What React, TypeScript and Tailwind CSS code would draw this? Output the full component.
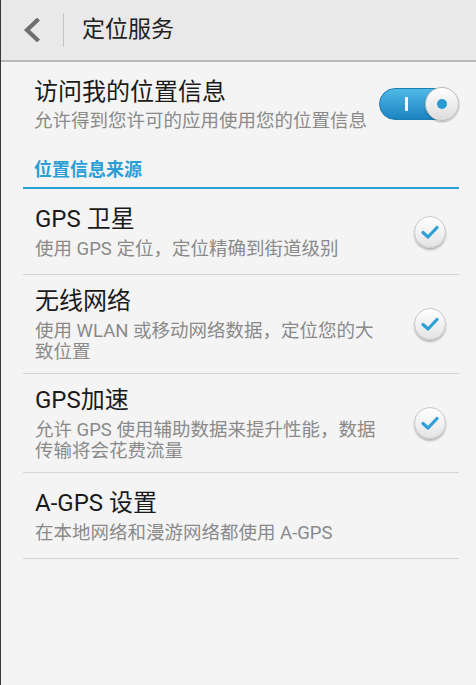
import React from "react";

const font = { fontFamily: '"Roboto", "Noto Sans CJK SC", sans-serif' };

function Check() {
  return (
    <div className="w-[32px] h-[32px] rounded-full bg-gradient-to-b from-[#ffffff] to-[#e4e4e4] border border-[#c9c9c9] shadow-[0_2px_2px_rgba(0,0,0,0.25)] flex items-center justify-center shrink-0">
      <svg width="20" height="16" viewBox="0 0 20 16">
        <path d="M3 8.5 L8 13 L17 3.5" fill="none" stroke="#2f9fd6" strokeWidth="3.2" strokeLinecap="round" strokeLinejoin="round" />
      </svg>
    </div>
  );
}

function Toggle() {
  return (
    <div className="relative w-[80px] h-[32px] shrink-0">
      <div className="absolute left-0 top-0 w-[76px] h-[32px] rounded-full bg-gradient-to-b from-[#4fb9e6] to-[#1b84c0] border border-[#1d7fb4] flex items-center pl-[25px]">
        <div className="w-[3px] h-[14px] bg-white rounded-[1px]" />
      </div>
      <div className="absolute right-0 top-[-1px] w-[34px] h-[34px] rounded-full bg-gradient-to-b from-[#ffffff] to-[#dcdcdc] border border-[#bdbdbd] shadow-[0_1px_2px_rgba(0,0,0,0.3)] flex items-center justify-center">
        <div className="w-[10px] h-[10px] rounded-full bg-[#2a9ad3]" />
      </div>
    </div>
  );
}

function Row({ title, sub, check = true }: { title: string; sub: string[]; check?: boolean }) {
  return (
    <div className="flex items-center min-h-[86px] py-[10px] pl-[12px] pr-[13px] border-b border-[#d4d4d4]">
      <div className="flex-1 flex flex-col">
        <div className="text-[24px] leading-[32px] text-[#1a1a1a]">{title}</div>
        <div className="mt-[4px] text-[18.5px] leading-[21px] text-[#8a8a8a]">
          {sub.map((s, i) => (
            <div key={i}>{s}</div>
          ))}
        </div>
      </div>
      {check && <Check />}
    </div>
  );
}

export default function App() {
  return (
    <div className="w-[476px] h-[685px] bg-[#f4f4f4] border-l border-[#3a3a3a] flex flex-col overflow-hidden" style={font}>
      <div className="h-[62px] bg-[#e9e9e9] border-b-2 border-[#b8b8b8] flex items-center shrink-0">
        <div className="w-[62px] flex items-center justify-center">
          <svg width="24" height="24" viewBox="0 0 24 24" className="ml-[-1px]">
            <path d="M17 2.5 L7 12 L17 21.5" fill="none" stroke="#6e6e6e" strokeWidth="4.2" strokeLinecap="square" strokeLinejoin="miter" />
          </svg>
        </div>
        <div className="w-px h-[34px] bg-[#c4c4c4]" />
        <div className="ml-[18px] text-[23px] text-[#222222]">定位服务</div>
      </div>

      <div className="flex items-center pl-[33px] pr-[17px] pt-[14px]">
        <div className="flex-1">
          <div className="text-[24px] leading-[32px] text-[#1a1a1a]">访问我的位置信息</div>
          <div className="mt-[3px] text-[18.5px] leading-[21px] text-[#8a8a8a]">允许得到您许可的应用使用您的位置信息</div>
        </div>
        <Toggle />
      </div>

      <div className="ml-[22px] mr-[17px] mt-[26px]">
        <div className="pl-[11px] text-[18px] leading-[24px] font-bold text-[#2a9fd5]">位置信息来源</div>
        <div className="mt-[5px] h-[2px] bg-[#2a9fd5]" />
      </div>

      <div className="ml-[22px] mr-[17px] flex flex-col">
        <Row title="GPS 卫星" sub={["使用 GPS 定位，定位精确到街道级别"]} />
        <Row title="无线网络" sub={["使用 WLAN 或移动网络数据，定位您的大", "致位置"]} />
        <Row title="GPS加速" sub={["允许 GPS 使用辅助数据来提升性能，数据", "传输将会花费流量"]} />
        <Row title="A-GPS 设置" sub={["在本地网络和漫游网络都使用 A-GPS"]} check={false} />
      </div>
    </div>
  );
}
